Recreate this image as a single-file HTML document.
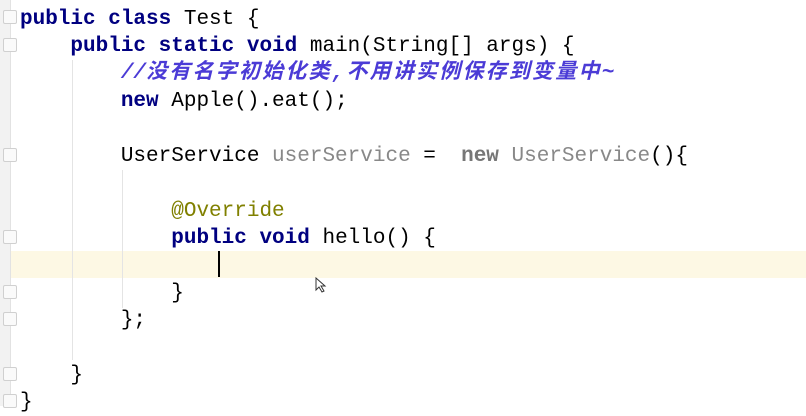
<!DOCTYPE html>
<html><head><meta charset="utf-8"><style>
body{margin:0;width:806px;height:406px;overflow:hidden;background:#fff;position:relative;font-family:"Liberation Mono","Noto Sans CJK SC",monospace;font-size:21px}
.gut{position:absolute;left:0;top:0;width:10px;height:406px;background:#f2f2f2;border-right:1px solid #e2e2e2}
.hl{position:absolute;left:0;top:251px;width:806px;height:27px;background:#fdf8e4}
.g{position:absolute;width:1px;background:#e4e4e4}
.l{position:absolute;left:20px;white-space:pre;line-height:27px;color:#000}
.k{color:#000080;font-weight:bold}
.v{color:#888}
.c{color:#4b3bd6;font-style:italic;font-weight:bold}
.c .z{letter-spacing:2.2px}
.a{color:#808000}
.f{position:absolute;left:3px;width:14px;height:14px;border:1px solid #d0d0d0;background:#fafafa;box-sizing:border-box;border-radius:2px}
.cur{position:absolute;left:218px;top:251px;width:2px;height:26px;background:#000}
</style></head><body>
<div class="hl"></div>
<div class="gut"></div>
<div class="f" style="top:10px"></div>
<div class="f" style="top:38px"></div>
<div class="f" style="top:148px"></div>
<div class="f" style="top:230px"></div>
<div class="f" style="top:285px"></div>
<div class="f" style="top:312px"></div>
<div class="f" style="top:367px"></div>
<div class="f" style="top:394px"></div>
<div class="g" style="left:72px;top:60px;height:300px"></div>
<div class="g" style="left:122px;top:170px;height:138px"></div>
<div class="l" style="top:6px"><span class="k">public class</span> Test {</div>
<div class="l" style="top:33px">    <span class="k">public static void</span> main(String[] args) {</div>
<div class="l" style="top:60px">        <span class="c">//<span class="z">没有名字初始化类,不用讲实例保存到变量中</span>~</span></div>
<div class="l" style="top:88px">        <span class="k">new</span> Apple().eat();</div>
<div class="l" style="top:143px">        UserService <span class="v">userService</span> =  <span class="k" style="color:#777">new</span> <span class="v">UserService</span>(){</div>
<div class="l" style="top:198px">            <span class="a">@Override</span></div>
<div class="l" style="top:225px">            <span class="k">public void</span> hello() {</div>
<div class="l" style="top:280px">            }</div>
<div class="l" style="top:307px">        };</div>
<div class="l" style="top:362px">    }</div>
<div class="l" style="top:389px">}</div>
<div class="cur"></div>
<svg style="position:absolute;left:315px;top:277px" width="12" height="16"><path d="M1 1 L1 13 L4 10 L7 15 L9 14 L6 9 L10 9 Z" fill="#fff" stroke="#333" stroke-width="1"/></svg>
</body></html>
